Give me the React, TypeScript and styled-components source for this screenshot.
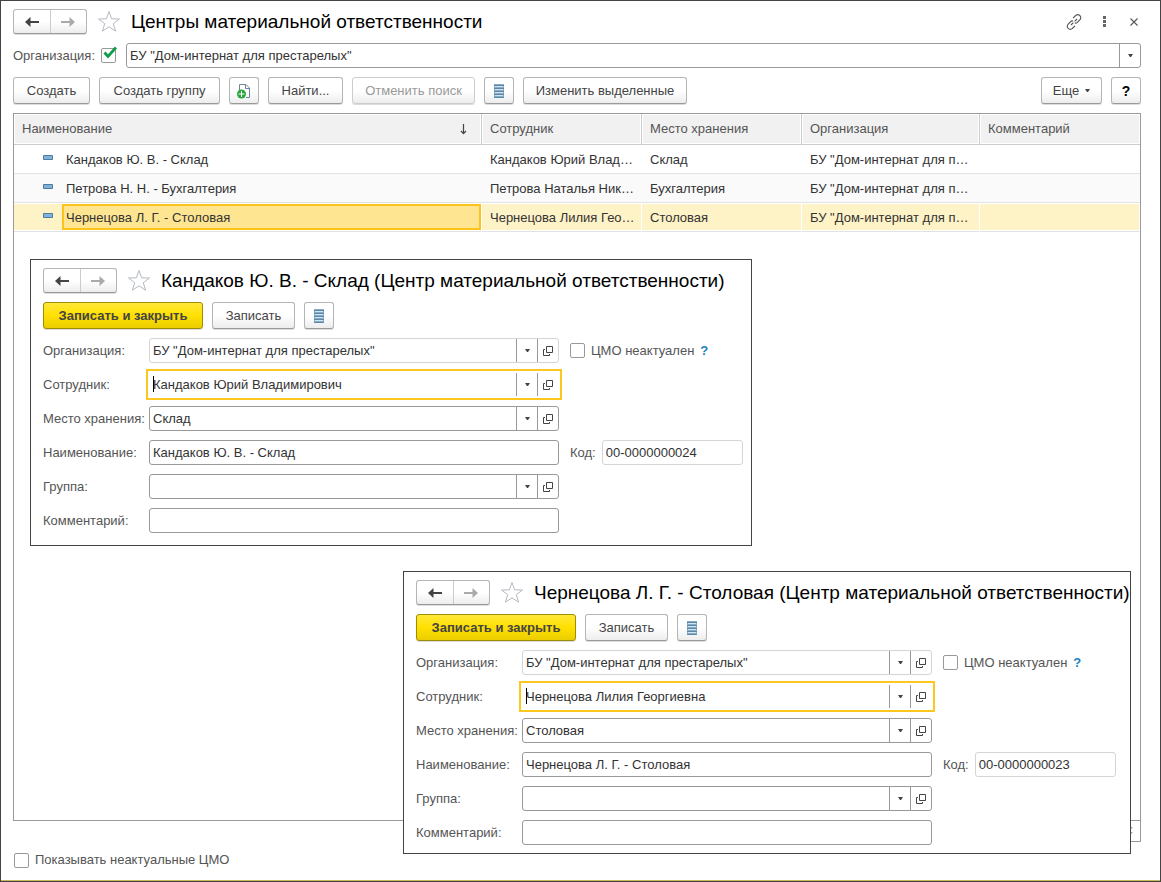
import React, { useId, useState } from "react";
import styled, { createGlobalStyle, css } from "styled-components";

const GlobalStyle = createGlobalStyle`
  *, *::before, *::after { box-sizing: border-box; }
  body { margin: 0; background: #fff; }
  body, button, input, select {
    font-family: "Liberation Sans", Arial, sans-serif;
    font-size: 13px;
    line-height: 16px;
    color: #333;
  }
`;

const Page = styled.main`
  position: relative;
  display: flex;
  flex-direction: column;
  min-height: 100vh;
  padding: 8px 19px 13px 12px;
  border: 1px solid #444;
  box-shadow: inset 0 -1px 0 #c9b95c;
`;

const TitleBar = styled.header`
  display: flex;
  align-items: center;
  height: 25px;
`;

const NavGroup = styled.div`
  display: flex;
  flex: none;
  width: 74px;
  height: 25px;
  border: 1px solid #b5b5b5;
  border-bottom-color: #999;
  border-radius: 3px;
  background: linear-gradient(#fff 50%, #ededed);
  box-shadow: 0 1px 0 #ddd;
`;

const NavButton = styled.button`
  display: flex;
  flex: 1;
  align-items: center;
  justify-content: center;
  padding: 0;
  border: 0;
  background: none;
  color: #444;

  & + & { border-left: 1px solid #ccc; }
  &:disabled { color: #aaa; }
`;

const IconButton = styled.button`
  display: flex;
  flex: none;
  align-items: center;
  justify-content: center;
  width: 30px;
  height: 24px;
  padding: 0;
  border: 0;
  background: none;
  color: #555;
`;

const StarButton = styled(IconButton)`
  width: 24px;
  margin: 0 10px;
`;

const WindowActions = styled.div`
  display: flex;
  margin-right: -8px;
`;

const Title = styled.h1`
  flex: 1;
  margin: 0;
  font-size: 19px;
  line-height: 24px;
  font-weight: 400;
  color: #000;
  white-space: nowrap;
`;

const FilterBar = styled.div`
  display: flex;
  align-items: center;
  gap: 10px;
  height: 25px;
  margin-top: 9px;
`;

const FilterToggle = styled.label`
  display: flex;
  align-items: center;
  gap: 6px;
  color: #555;
`;

const boxStyle = css<{ $muted?: boolean; $focused?: boolean }>`
  height: 25px;
  border: 1px solid ${(p) => (p.$focused ? "#fff" : p.$muted ? "#d5d5d5" : "#999")};
  border-radius: 3px;
  background: #fff;
  ${(p) => p.$focused && "outline: 2px solid #fcc81f; outline-offset: 1px; border-radius: 0;"}
`;

const SelectBox = styled.div`
  display: grid;
  flex: 1;
  grid-template-columns: 1fr 21px;
  ${boxStyle}
`;

const Select = styled.select`
  grid-area: 1 / 1 / 2 / 3;
  min-width: 0;
  padding: 0 24px 0 3px;
  border: 0;
  background: none;
  appearance: none;
  outline: none;
`;

const SelectArrow = styled.span`
  display: flex;
  grid-area: 1 / 2 / 2 / 3;
  align-items: center;
  justify-content: center;
  border-left: 1px solid #999;
  pointer-events: none;
`;

const Toolbar = styled.div`
  display: flex;
  gap: 9px;
  margin-top: 9px;
`;

const Spacer = styled.span`
  flex: 1;
`;

const Button = styled.button<{ $width: number; $primary?: boolean }>`
  display: flex;
  flex: none;
  align-items: center;
  justify-content: center;
  gap: 6px;
  width: ${(p) => p.$width}px;
  height: 27px;
  padding: 0;
  border: 1px solid #b5b5b5;
  border-bottom-color: #999;
  border-radius: 3px;
  background: linear-gradient(#fff 50%, #ededed);
  box-shadow: 0 1px 0 #ddd;
  color: #444;
  white-space: nowrap;

  &:disabled {
    color: #999;
    border-color: #ccc;
  }

  ${(p) =>
    p.$primary &&
    `
    border-color: #a08c00;
    background: linear-gradient(#ffe838, #ffe000 50%, #ebcd00);
    font-weight: 700;
  `}
`;

const HelpMark = styled.b`
  font-size: 14px;
  color: #000;
`;

const List = styled.section`
  flex: 1;
  margin-top: 9px;
  border: 1px solid #999;
`;

const Table = styled.table`
  width: 100%;
  table-layout: fixed;
  border-collapse: separate;
  border-spacing: 0;
`;

const Column = styled.col<{ $width?: number }>`
  width: ${(p) => (p.$width ? `${p.$width}px` : "auto")};
`;

const HeadCell = styled.th`
  height: 31px;
  padding: 0 8px;
  border-right: 1px solid #ccc;
  border-bottom: 1px solid #ccc;
  background: #f1f1f1;
  box-shadow: inset 0 0 0 1px #fff;
  font-weight: 400;
  text-align: left;
  color: #555;

  &:last-child { border-right: 0; }
`;

const HeadContent = styled.div`
  display: flex;
  align-items: center;
  justify-content: space-between;
  padding-right: 6px;
`;

const Row = styled.tr<{ $selected: boolean }>`
  background: #fff;
  &:nth-child(even) { background: #fafafa; }
  ${(p) =>
    p.$selected &&
    css`
      background: #fef2c7;
      td {
        box-shadow: inset 0 1px 0 #fff, inset 0 -1px 0 #fff;
        border-right: 1px solid #fff;
      }
    `}
`;

const Cell = styled.td`
  height: 29px;
  padding: 2px 0 0 8px;
  border-bottom: 1px solid #e2e2e2;
  white-space: nowrap;
`;

const NameCell = styled(Cell)`
  padding: 1px 0;
`;

const NameContent = styled.div`
  display: flex;
  align-items: center;
  height: 26px;
  padding-left: 29px;
`;

const NameText = styled.span<{ $active: boolean }>`
  flex: 1;
  height: 26px;
  margin-left: 9px;
  padding: 4px 2px 2px;
  line-height: 16px;
  border: 2px solid ${(p) => (p.$active ? "#fcc41a" : "transparent")};
  background: ${(p) => (p.$active ? "#fee591" : "transparent")};
`;

const Pager = styled.div`
  display: flex;
  align-self: flex-end;
  margin-top: -1px;
  border: 1px solid #999;
`;

const PagerButton = styled.button`
  display: flex;
  align-items: center;
  justify-content: center;
  width: 20px;
  height: 20px;
  padding: 0;
  border: 0;
  background: #fff;
  color: #aaa;
`;

const CheckLabel = styled.label`
  display: flex;
  align-items: center;
  gap: 6px;
  color: #555;
`;

const Footer = styled.footer`
  display: flex;
  margin-top: 10px;
  padding-left: 1px;
`;

const CheckBox = styled.span`
  position: relative;
  display: block;
  flex: none;
  width: 15px;
  height: 15px;
`;

const CheckInput = styled.input`
  display: block;
  width: 15px;
  height: 15px;
  margin: 0;
  border: 1px solid #999;
  border-radius: 2px;
  background: #fff;
  appearance: none;
`;

const CheckMark = styled.svg`
  position: absolute;
  left: 2px;
  top: -2px;
  pointer-events: none;
`;

const Window = styled.section<{ $left: number; $top: number; $width: number; $bottom: number }>`
  position: absolute;
  left: ${(p) => p.$left}px;
  top: ${(p) => p.$top}px;
  width: ${(p) => p.$width}px;
  padding: 8px 0 ${(p) => p.$bottom}px 12px;
  border: 1px solid #444;
  background: #fff;
`;

const Fields = styled.div`
  display: grid;
  grid-template-columns: 106px 410px auto;
  grid-auto-rows: 25px;
  row-gap: 9px;
  align-items: center;
  margin-top: 9px;
`;

const FieldLabel = styled.label`
  grid-column: 1;
  color: #555;
  white-space: nowrap;
`;

const FieldBox = styled.div<{ $muted?: boolean; $focused?: boolean }>`
  position: relative;
  display: flex;
  ${boxStyle}
`;

const TextInput = styled.input`
  flex: 1;
  min-width: 0;
  padding: 0 3px;
  border: 0;
  background: none;
  outline: none;
`;

const Caret = styled.span`
  position: absolute;
  left: 3px;
  top: 3px;
  width: 1px;
  height: 16px;
  background: #000;
`;

const FieldButton = styled.button`
  display: flex;
  flex: none;
  align-items: center;
  justify-content: center;
  width: 21px;
  padding: 0;
  border: 0;
  border-left: 1px solid #999;
  background: none;
  color: #444;
`;

const Aside = styled.div`
  display: flex;
  align-items: center;
  gap: 6px;
  margin-left: 11px;
  color: #555;
`;

const CodeBox = styled(FieldBox)`
  width: 141px;
`;

const HelpLink = styled.a`
  font-weight: 700;
  color: #1a7fc1;
  text-decoration: none;
`;

const ArrowIcon = ({ flip }: { flip?: boolean }) => (
  <svg width="14" height="10" viewBox="0 0 14 10" aria-hidden="true">
    <g transform={flip ? "translate(14 0) scale(-1 1)" : undefined}>
      <path d="M0 5 5.5 0 5.5 10Z" fill="currentColor" />
      <path d="M4 5H14" stroke="currentColor" strokeWidth="2" />
    </g>
  </svg>
);

const StarIcon = () => (
  <svg width="24" height="23" viewBox="0 0 24 23" aria-hidden="true">
    <path
      d="M12 1.5 14.6 8.8 22.5 9 16.3 13.7 18.6 21.2 12 16.8 5.4 21.2 7.7 13.7 1.5 9 9.4 8.8Z"
      fill="#fff"
      stroke="#b4bac2"
    />
  </svg>
);

const LinkIcon = () => (
  <svg width="16" height="16" viewBox="0 0 16 16" fill="none" stroke="currentColor" strokeWidth="1.1" aria-hidden="true">
    <path d="M7 4.2 9.7 1.5a2.7 2.7 0 0 1 4 0 2.9 2.9 0 0 1 .3 4.2L11.4 8.4A2.7 2.7 0 0 1 8.9 9" />
    <path d="M9 11.8 6.3 14.5a2.7 2.7 0 0 1-4 0 2.9 2.9 0 0 1-.3-4.2L4.6 7.6A2.7 2.7 0 0 1 7.1 7" />
    <path d="M5 11 7.4 8.6M8.6 7.4 11 5" />
  </svg>
);

const DotsIcon = () => (
  <svg width="3" height="11" viewBox="0 0 3 11" fill="#666" aria-hidden="true">
    <path d="M0 0H3V3H0ZM0 4H3V7H0ZM0 8H3V11H0Z" />
  </svg>
);

const CloseIcon = () => (
  <svg width="8" height="8" viewBox="0 0 8 8" stroke="currentColor" strokeWidth="1.1" aria-hidden="true">
    <path d="M0.5 0.5 7.5 7.5M7.5 0.5 0.5 7.5" />
  </svg>
);

const CaretIcon = () => (
  <svg width="5" height="3" viewBox="0 0 5 3" aria-hidden="true">
    <path d="M0 0H5L3 3H2Z" fill="#444" />
  </svg>
);

const OpenIcon = () => (
  <svg width="10" height="10" viewBox="0 0 10 10" fill="none" stroke="#444" aria-hidden="true">
    <path d="M3.5 0.5H9.5V6.5H3.5ZM2 3.5H0.5V9.5H6.5V8" />
  </svg>
);

const ListIcon = () => (
  <svg width="10" height="14" viewBox="0 0 10 14" aria-hidden="true">
    <path d="M0 0H10V14H0Z" fill="#86abc6" />
    <path d="M1 2.5H9M1 5.5H9M1 8.5H9M1 11.5H9" stroke="#cfe3f1" />
    <path d="M0 1.5H10M0 4.5H10M0 7.5H10M0 10.5H10M0 13.5H10" stroke="#5c87a5" />
  </svg>
);

const AddCopyIcon = () => (
  <svg width="14" height="16" viewBox="0 0 14 16" fill="none" aria-hidden="true">
    <path d="M2.5 7V1.5H9L12.5 5V14.5H9" stroke="#71869b" />
    <path d="M8.5 1.5V5.5H12.5" stroke="#71869b" />
    <circle cx="4.5" cy="11" r="4.5" fill="#2ba53c" />
    <path d="M4.5 8V14M1.5 11H7.5" stroke="#fff" />
  </svg>
);

const SortIcon = () => (
  <svg width="7" height="11" viewBox="0 0 7 11" aria-hidden="true">
    <path d="M3.5 0V9M1 7 3.5 9.7 6 7" fill="none" stroke="#444" strokeWidth="1.2" />
  </svg>
);

const ItemIcon = () => (
  <svg width="10" height="8" viewBox="0 0 10 8" aria-hidden="true">
    <path d="M0.5 0.5H9.5V4.5H0.5Z" fill="#7fb3db" stroke="#4f7c9e" />
  </svg>
);

const LastIcon = () => (
  <svg width="8" height="9" viewBox="0 0 8 9" fill="currentColor" aria-hidden="true">
    <path d="M0 0H7L3.5 4ZM0 5H7L3.5 9Z" />
  </svg>
);

function Check({ id, checked: initial = false }: { id: string; checked?: boolean }) {
  const [checked, setChecked] = useState(initial);
  return (
    <CheckBox>
      <CheckInput id={id} type="checkbox" checked={checked} onChange={(e) => setChecked(e.target.checked)} />
      {checked && (
        <CheckMark width="14" height="14" viewBox="0 0 14 14">
          <path d="M1.5 6.5 5 10.5 13 1.5" fill="none" stroke="#0f9d4a" strokeWidth="2.8" />
        </CheckMark>
      )}
    </CheckBox>
  );
}

function Heading({ title, nested }: { title: string; nested?: boolean }) {
  return (
    <TitleBar>
      <NavGroup>
        <NavButton type="button" aria-label="Назад"><ArrowIcon /></NavButton>
        <NavButton type="button" aria-label="Вперед" disabled><ArrowIcon flip /></NavButton>
      </NavGroup>
      <StarButton type="button" aria-label="В избранное"><StarIcon /></StarButton>
      <Title as={nested ? "h2" : "h1"}>{title}</Title>
      {!nested && (
        <WindowActions>
          <IconButton type="button" aria-label="Ссылка"><LinkIcon /></IconButton>
          <IconButton type="button" aria-label="Меню"><DotsIcon /></IconButton>
          <IconButton type="button" aria-label="Закрыть"><CloseIcon /></IconButton>
        </WindowActions>
      )}
    </TitleBar>
  );
}

interface FieldProps {
  label: string;
  value?: string;
  picker?: boolean;
  muted?: boolean;
  focused?: boolean;
}

function Field({ label, value = "", picker, muted, focused }: FieldProps) {
  const id = useId();
  return (
    <>
      <FieldLabel htmlFor={id}>{label}:</FieldLabel>
      <FieldBox $muted={muted} $focused={focused}>
        {focused && <Caret />}
        <TextInput id={id} type="text" defaultValue={value} />
        {picker && (
          <>
            <FieldButton type="button" aria-label="Выбрать"><CaretIcon /></FieldButton>
            <FieldButton type="button" aria-label="Открыть"><OpenIcon /></FieldButton>
          </>
        )}
      </FieldBox>
    </>
  );
}

interface CenterWindowProps {
  name: string;
  employee: string;
  place: string;
  code: string;
  left: number;
  top: number;
  width: number;
  bottom: number;
}

function CenterWindow({ name, employee, place, code, left, top, width, bottom }: CenterWindowProps) {
  const id = useId();
  return (
    <Window $left={left} $top={top} $width={width} $bottom={bottom}>
      <Heading nested title={`${name} (Центр материальной ответственности)`} />
      <Toolbar>
        <Button type="button" $width={160} $primary>Записать и закрыть</Button>
        <Button type="button" $width={83}>Записать</Button>
        <Button type="button" $width={30} aria-label="Список"><ListIcon /></Button>
      </Toolbar>
      <Fields>
        <Field label="Организация" value={organization} picker muted />
        <Aside>
          <Check id={`${id}-inactive`} />
          <label htmlFor={`${id}-inactive`}>ЦМО неактуален</label>
          <HelpLink href="#help">?</HelpLink>
        </Aside>
        <Field label="Сотрудник" value={employee} picker focused />
        <Field label="Место хранения" value={place} picker />
        <Field label="Наименование" value={name} />
        <Aside>
          <label htmlFor={`${id}-code`}>Код:</label>
          <CodeBox $muted>
            <TextInput id={`${id}-code`} type="text" defaultValue={code} />
          </CodeBox>
        </Aside>
        <Field label="Группа" picker />
        <Field label="Комментарий" />
      </Fields>
    </Window>
  );
}

const organization = 'БУ "Дом-интернат для престарелых"';
const organizationShort = 'БУ "Дом-интернат для п…';

const centers = [
  { name: "Кандаков Ю. В. - Склад", employee: "Кандаков Юрий Влад…", place: "Склад" },
  { name: "Петрова Н. Н. - Бухгалтерия", employee: "Петрова Наталья Ник…", place: "Бухгалтерия" },
  { name: "Чернецова Л. Г. - Столовая", employee: "Чернецова Лилия Гео…", place: "Столовая" },
];

export default function App() {
  return (
    <>
      <GlobalStyle />
      <Page>
        <Heading title="Центры материальной ответственности" />
        <FilterBar>
          <FilterToggle htmlFor="by-organization">
            Организация:
            <Check id="by-organization" checked />
          </FilterToggle>
          <SelectBox>
            <Select aria-label="Организация" defaultValue={organization}>
              <option>{organization}</option>
            </Select>
            <SelectArrow><CaretIcon /></SelectArrow>
          </SelectBox>
        </FilterBar>
        <Toolbar>
          <Button type="button" $width={77}>Создать</Button>
          <Button type="button" $width={121}>Создать группу</Button>
          <Button type="button" $width={30} aria-label="Скопировать"><AddCopyIcon /></Button>
          <Button type="button" $width={75}>Найти...</Button>
          <Button type="button" $width={123} disabled>Отменить поиск</Button>
          <Button type="button" $width={30} aria-label="Список"><ListIcon /></Button>
          <Button type="button" $width={164}>Изменить выделенные</Button>
          <Spacer />
          <Button type="button" $width={61}>Еще <CaretIcon /></Button>
          <Button type="button" $width={30}><HelpMark>?</HelpMark></Button>
        </Toolbar>
        <List>
          <Table>
            <colgroup>
              <Column />
              <Column $width={160} />
              <Column $width={160} />
              <Column $width={178} />
              <Column $width={160} />
            </colgroup>
            <thead>
              <tr>
                <HeadCell><HeadContent>Наименование<SortIcon /></HeadContent></HeadCell>
                <HeadCell>Сотрудник</HeadCell>
                <HeadCell>Место хранения</HeadCell>
                <HeadCell>Организация</HeadCell>
                <HeadCell>Комментарий</HeadCell>
              </tr>
            </thead>
            <tbody>
              {centers.map((c, i) => (
                <Row key={c.name} $selected={i === 2}>
                  <NameCell>
                    <NameContent>
                      <ItemIcon />
                      <NameText $active={i === 2}>{c.name}</NameText>
                    </NameContent>
                  </NameCell>
                  <Cell>{c.employee}</Cell>
                  <Cell>{c.place}</Cell>
                  <Cell>{organizationShort}</Cell>
                  <Cell />
                </Row>
              ))}
            </tbody>
          </Table>
        </List>
        <Pager>
          <PagerButton type="button" aria-label="В конец" disabled><LastIcon /></PagerButton>
        </Pager>
        <Footer>
          <CheckLabel htmlFor="show-inactive">
            <Check id="show-inactive" />
            Показывать неактуальные ЦМО
          </CheckLabel>
        </Footer>
        <CenterWindow
          name="Кандаков Ю. В. - Склад"
          employee="Кандаков Юрий Владимирович"
          place="Склад"
          code="00-0000000024"
          left={29}
          top={258}
          width={722}
          bottom={12}
        />
        <CenterWindow
          name="Чернецова Л. Г. - Столовая"
          employee="Чернецова Лилия Георгиевна"
          place="Столовая"
          code="00-0000000023"
          left={402}
          top={570}
          width={728}
          bottom={8}
        />
      </Page>
    </>
  );
}
